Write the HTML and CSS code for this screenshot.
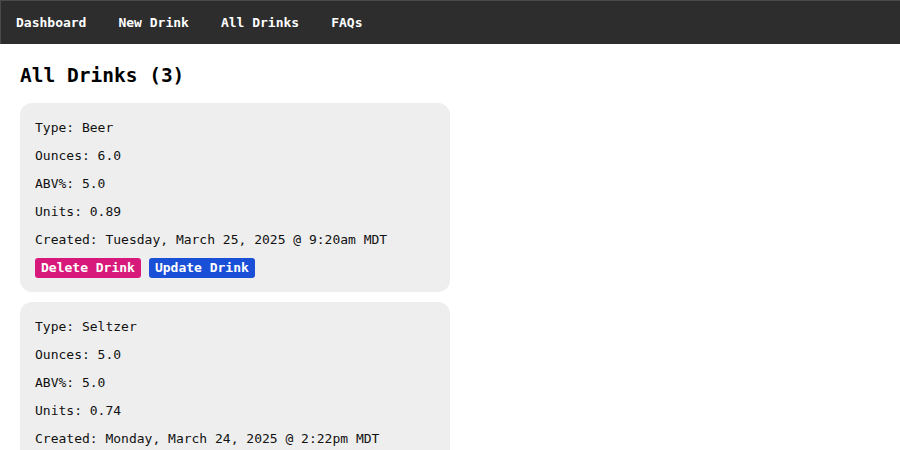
FILE: index.html
```html
<!DOCTYPE html>
<html lang="en">
<head>
<meta charset="utf-8">
<title>All Drinks</title>
<link rel="stylesheet" href="styles.css">
</head>
<body>
<nav class="nav">
  <a class="nav-link" href="#">Dashboard</a>
  <a class="nav-link" href="#">New Drink</a>
  <a class="nav-link" href="#">All Drinks</a>
  <a class="nav-link" href="#">FAQs</a>
</nav>
<main class="main">
  <h1 class="title">All Drinks (3)</h1>
  <div class="list">
    <div class="card">
      <p class="line">Type: Beer</p>
      <p class="line">Ounces: 6.0</p>
      <p class="line">ABV%: 5.0</p>
      <p class="line">Units: 0.89</p>
      <p class="line">Created: Tuesday, March 25, 2025 @ 9:20am MDT</p>
      <div class="actions">
        <button class="btn btn-delete">Delete Drink</button>
        <button class="btn btn-update">Update Drink</button>
      </div>
    </div>
    <div class="card">
      <p class="line">Type: Seltzer</p>
      <p class="line">Ounces: 5.0</p>
      <p class="line">ABV%: 5.0</p>
      <p class="line">Units: 0.74</p>
      <p class="line">Created: Monday, March 24, 2025 @ 2:22pm MDT</p>
      <div class="actions">
        <button class="btn btn-delete">Delete Drink</button>
        <button class="btn btn-update">Update Drink</button>
      </div>
    </div>
  </div>
</main>
</body>
</html>
```
FILE: styles.css
```css
* { box-sizing: border-box; }
html, body { margin: 0; padding: 0; background: #ffffff; }
body {
  font-family: "DejaVu Sans Mono", "Liberation Mono", monospace;
  font-size: 13px;
  color: #111111;
}
.nav {
  display: flex;
  gap: 32px;
  height: 44px;
  align-items: center;
  background: #2d2d2d;
  border-top: 1px solid #4a4a4a;
  border-left: 1px solid #4a4a4a;
  padding-left: 15px;
}
.nav-link {
  color: #ffffff;
  font-weight: bold;
  text-decoration: none;
  line-height: 16px;
}
.main { padding: 0 20px; }
.title {
  margin: 20px 0 15px 0;
  font-size: 19.5px;
  line-height: 24px;
  font-weight: bold;
  color: #000000;
}
.list { display: flex; flex-direction: column; gap: 10px; }
.card {
  width: 430px;
  background: #eeeeee;
  border-radius: 12px;
  padding: 17px 15px 13px 15px;
}
.line {
  margin: 0 0 12px 0;
  line-height: 16px;
}
.actions { display: flex; gap: 8px; margin-top: -2px; margin-bottom: 1px; }
.btn {
  font-family: inherit;
  font-size: 13px;
  font-weight: bold;
  color: #ffffff;
  border: none;
  border-radius: 3px;
  height: 20px;
  line-height: 20px;
  padding: 0 6px;
  cursor: pointer;
}
.btn-delete { background: #d6197a; }
.btn-update { background: #1a4fd8; }
```
